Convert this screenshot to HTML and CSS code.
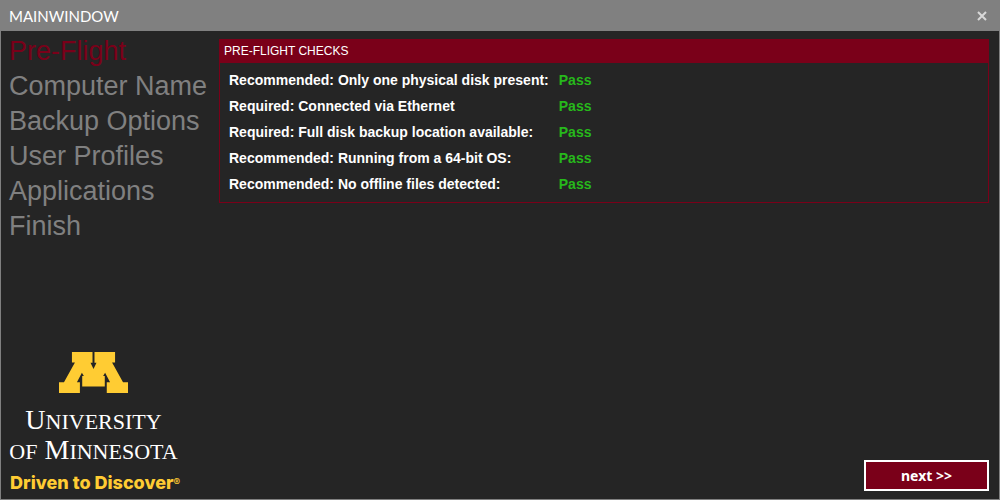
FILE: index.html
```html
<!DOCTYPE html>
<html lang="en">
<head>
<meta charset="utf-8">
<title>MainWindow</title>
<link rel="stylesheet" href="styles.css">
</head>
<body>
<div class="window">
  <header class="titlebar">
    <h1 class="titlebar-text">MAINWINDOW</h1>
    <button class="close" type="button" aria-label="Close">
      <svg class="close-icon" viewBox="0 0 10 10" aria-hidden="true"><path d="M1 1L9 9M9 1L1 9"/></svg>
    </button>
  </header>
  <div class="content">
    <aside class="sidebar">
      <nav class="steps">
        <a class="step step-active" href="#preflight" aria-current="step">Pre-Flight</a>
        <a class="step" href="#computer">Computer Name</a>
        <a class="step" href="#backup">Backup Options</a>
        <a class="step" href="#profiles">User Profiles</a>
        <a class="step" href="#applications">Applications</a>
        <a class="step" href="#finish">Finish</a>
      </nav>
      <div class="brand">
        <svg class="brand-mark" viewBox="178 36 208 123" aria-hidden="true"><path d="M217 36H279V68H273L282 87L291 68H285V36H347V67H338L371 127H386V159H322V127H332L317 98L311 108H316V140H248V108H253L247 98L232 127H241V159H178V127H193L226 67H217Z"/></svg>
        <div class="brand-name">U<span class="brand-small">NIVERSITY</span></div>
        <div class="brand-name"><span class="brand-small">OF</span> M<span class="brand-small">INNESOTA</span></div>
        <div class="brand-tagline">Driven to Discover<span class="brand-reg">®</span></div>
      </div>
    </aside>
    <main class="main">
      <section class="panel" id="preflight">
        <h2 class="panel-title">PRE-FLIGHT CHECKS</h2>
        <table class="checks">
          <tr><th scope="row">Recommended: Only one physical disk present:</th><td>Pass</td></tr>
          <tr><th scope="row">Required: Connected via Ethernet</th><td>Pass</td></tr>
          <tr><th scope="row">Required: Full disk backup location available:</th><td>Pass</td></tr>
          <tr><th scope="row">Recommended: Running from a 64-bit OS:</th><td>Pass</td></tr>
          <tr><th scope="row">Recommended: No offline files detected:</th><td>Pass</td></tr>
        </table>
      </section>
      <button class="next" type="button">next &gt;&gt;</button>
    </main>
  </div>
</div>
</body>
</html>
```
FILE: styles.css
```css
* {
  box-sizing: border-box;
}

body {
  margin: 0;
  background: #252525;
  font-family: "Liberation Sans", Arial, sans-serif;
}

.window {
  display: flex;
  flex-direction: column;
  min-height: 100vh;
  border: 1px solid #808080;
  background: #252525;
}

.titlebar {
  display: flex;
  align-items: center;
  justify-content: space-between;
  height: 30px;
  padding: 0 12px 0 8px;
  background: #808080;
}

.titlebar-text {
  margin: 0;
  color: #fff;
  font-family: Lato, sans-serif;
  font-size: 15px;
  font-weight: 400;
  line-height: 30px;
}

.close {
  display: flex;
  padding: 0;
  border: 0;
  background: none;
}

.close-icon {
  width: 10px;
  height: 10px;
  fill: none;
  stroke: #d8d8d8;
  stroke-width: 2;
}

.content {
  display: flex;
  flex: 1;
  padding: 0 10px 0 8px;
}

.sidebar {
  display: flex;
  flex-direction: column;
  justify-content: space-between;
  width: 210px;
  flex-shrink: 0;
}

.steps {
  display: flex;
  flex-direction: column;
  padding-top: 3px;
}

.step {
  color: #808080;
  font-size: 27px;
  line-height: 35px;
  text-decoration: none;
  white-space: nowrap;
}

.step-active {
  color: #7a0019;
}

.brand {
  display: flex;
  flex-direction: column;
  align-items: center;
  width: 169px;
  padding-bottom: 2px;
  color: #fff;
  white-space: nowrap;
}

.brand-mark {
  width: 69px;
  height: 41px;
  margin-bottom: 12px;
  fill: #ffcc33;
}

.brand-name {
  font-family: "Liberation Serif", "Times New Roman", serif;
  font-size: 28px;
  line-height: 30px;
}

.brand-small {
  font-size: 22px;
  line-height: 1;
}

.brand-tagline {
  align-self: flex-start;
  margin-top: 4px;
  padding-left: 1px;
  color: #ffcc33;
  font-family: Inter, sans-serif;
  font-size: 18px;
  font-weight: 800;
  line-height: 28px;
}

.brand-reg {
  font-size: 10px;
  line-height: 1;
  vertical-align: 3px;
}

.main {
  display: flex;
  flex: 1;
  flex-direction: column;
  align-items: flex-end;
  justify-content: space-between;
  padding: 8px 0;
}

.panel {
  width: 100%;
  border: 1px solid #7a0019;
}

.panel-title {
  margin: 0;
  padding: 0 4px;
  background: #7a0019;
  color: #fff;
  font-size: 12px;
  font-weight: 400;
  line-height: 23px;
}

.checks {
  margin: 4px 9px 5px;
  border-collapse: collapse;
  font-size: 14px;
  font-weight: 700;
  line-height: 26px;
}

.checks th,
.checks td {
  padding: 0;
  text-align: left;
}

.checks th {
  color: #fff;
}

.checks td {
  padding-left: 10px;
  color: #27b81b;
}

.next {
  width: 125px;
  height: 31px;
  padding: 0;
  border: 2px solid #fff;
  background: #7a0019;
  color: #fff;
  font-family: "Noto Sans", sans-serif;
  font-size: 14px;
  font-weight: 700;
}
```
